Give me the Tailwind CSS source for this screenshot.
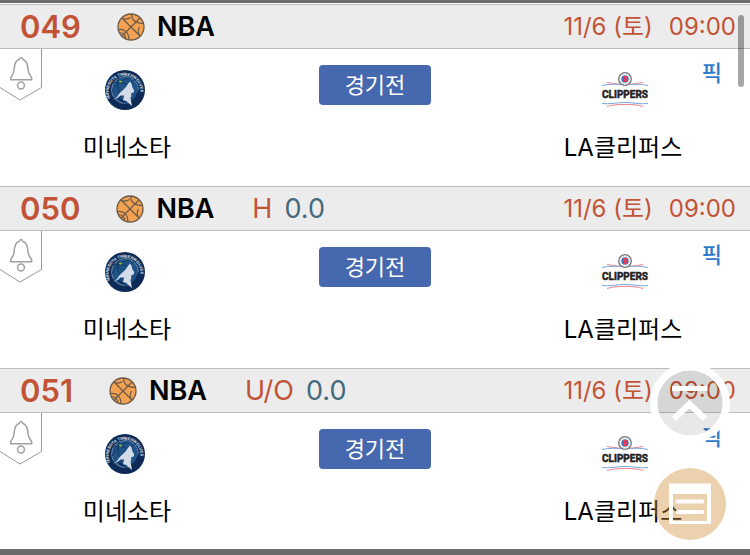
<!DOCTYPE html>
<html lang="ko">
<head>
<meta charset="utf-8">
<meta name="viewport" content="width=device-width, initial-scale=1">
<title>NBA</title>
<script src="https://cdn.jsdelivr.net/npm/@tailwindcss/browser@4"></script>
</head>
<body class="min-h-screen bg-white font-['Inter','Noto_Sans_CJK_KR',sans-serif] text-black overflow-hidden">
<svg class="hidden" aria-hidden="true">
  <symbol id="ball" viewBox="0 0 28 28">
    <circle cx="14" cy="14" r="13" fill="#f3a252" stroke="#6b5a49" stroke-width="1.3"/>
    <path d="M5 5 23 23M23 5 5 23M14.500 1c0 6 4 9.500 12.500 9.500M4.500 5c3 1.500 6 1.500 9-.5M1 16.500c7-1 11 3 11 10.500M2 19.500c4 0 6 2 7 6M23 23c-2.500-3-2.500-5.500-.5-9" fill="none" stroke="#6b5a49" stroke-width="1.2"/>
  </symbol>
  <symbol id="tag" viewBox="0 0 42 52">
    <path d="M41.5 0V38.500L20 51 0 38.500V0Z" fill="#fff"/>
    <path d="M41.500 0V38.500L20 51 0 38.500" fill="none" stroke="#999" stroke-width="1"/>
    <path d="M21 8.500c-1 0-1.300 1-1.600 1.700C15.600 11.500 14.500 15 14.300 19c-.2 4-.8 6-2.800 8.300-1 1.300-1.200 2-.8 3.500H31.600c.4-1.500.2-2.200-.8-3.500C28.800 25 28 23 27.800 19c-.2-4-1.600-7.500-5.200-8.800C22.300 9.500 22 8.500 21 8.500Z" fill="none" stroke="#a0a0a0" stroke-width="1.500" stroke-linejoin="round"/>
    <circle cx="21" cy="36.500" r="3.400" fill="none" stroke="#a0a0a0" stroke-width="1.500"/>
  </symbol>
  <symbol id="wolves" viewBox="0 0 40 40">
    <circle cx="20" cy="20" r="20" fill="#0e2a56"/>
    <circle cx="20" cy="20" r="13.500" fill="#1f5388" stroke="#9db0c6" stroke-width=".6"/>
    <path d="M8 13c7-2 15 0 22 8M7 22c4-8 10-13 18-14M14 8c-2 7-1 15 4 23M29 10c-6 5-8 12-8 20" fill="none" stroke="#123764" stroke-width="1"/>
    <path d="M5 29C9 26 13 28 15 31L28 37C35 31 36 25 34 19L30 27 23 34 14 28Z" fill="#0e2a56"/>
    <path d="M25 11.500 26.500 13.500 27.300 17 29.300 20.500 28.500 22.500 26 23.500 26.300 26 25.500 28 27 36 24 33.500 21.500 31 18 30 19.200 25.500 15.500 25.500 12.500 28 8 29.500 12 27 14.300 23.500 18 20 21 17 22.500 14.500Z" fill="#d3dce6"/>
    <path d="M13.500 11.500l2-1 2 1-2 1.300z" fill="#8abf32"/>
    <path id="wolvesArc" d="M5 28A16 16 0 1 1 34 28.500" fill="none"/>
    <text font-family="Liberation Sans" font-size="4" font-weight="700" fill="#e3e9f0"><textPath href="#wolvesArc">MINNESOTA TIMBERWOLVES</textPath></text>
  </symbol>
  <symbol id="clippers" viewBox="0 0 48 36">
    <g fill="none" stroke-width="1">
      <path d="M6 10.500c7 1 11 2 18 2s11-1 18-2M6 34.500c7-2 11-2 18-2s11 0 18 2" stroke="#ee8490"/>
      <path d="M1 13.500c8-2 14-1 23-1s15-1 23 1M1 31.500c8 1 14-1 23-1s15 2 23 1" stroke="#78a6dc"/>
    </g>
    <circle cx="24" cy="7" r="6.300" fill="#fff" stroke="#77777b" stroke-width="1.300"/>
    <circle cx="24" cy="7" r="5" fill="none" stroke="#aaa" stroke-width="1" stroke-dasharray="1 2"/>
    <circle cx="24" cy="7" r="3.700" fill="#3d75bd"/>
    <path d="M26.500 4.800h-3v4.400h3M23.500 7h3" fill="none" stroke="#ec3c58" stroke-width="1.500"/>
    <text x="24" y="26" text-anchor="middle" font-family="Roboto, Liberation Sans, sans-serif" font-size="10" font-weight="700" fill="#222" stroke="#222" stroke-width=".5">CLIPPERS</text>
  </symbol>
</svg>

<main class="border-t-3 border-[#6b6b6b]">
  <div class="pt-px pb-px">

  <section>
    <header class="flex h-[45px] items-center border-y border-[#bdbdbd] bg-[#ececec] pr-3.5 pl-5">
      <h2 class="text-[31px] leading-10 font-semibold text-[#c25336]">049</h2>
      <svg class="ml-9 size-7" aria-hidden="true"><use href="#ball"/></svg>
      <span class="ml-3 text-[27px] leading-10 font-semibold">NBA</span>
      <time class="ml-auto flex gap-4 text-[24px] leading-10 text-[#c25336]"><span>11/6 (토)</span><span>09:00</span></time>
    </header>
    <div class="relative grid grid-cols-3 pt-[21px] pb-[22px]">
      <button class="absolute top-0 left-0" aria-label="알림"><svg class="h-[52px] w-[42px]"><use href="#tag"/></svg></button>
      <div class="flex flex-col items-center gap-[22px]"><svg class="size-10" aria-hidden="true"><use href="#wolves"/></svg><p class="pl-1 text-[24px] leading-8">미네소타</p></div>
      <div class="-mt-[5px] flex items-start justify-center"><button class="h-10 w-28 rounded bg-[#4668ae] text-[22px] leading-8 text-white">경기전</button></div>
      <div class="flex flex-col items-center gap-[22px]"><span class="flex h-10 items-center"><svg class="h-9 w-12" aria-hidden="true"><use href="#clippers"/></svg></span><p class="pr-1 text-[24px] leading-8">LA클리퍼스</p></div>
      <a href="#" class="absolute top-2 right-7 text-[22px] leading-8 font-medium text-[#2f7bcb]">픽</a>
    </div>
  </section>

  <section>
    <header class="flex h-[45px] items-center border-y border-[#bdbdbd] bg-[#ececec] pr-3.5 pl-5">
      <h2 class="text-[31px] leading-10 font-semibold text-[#c25336]">050</h2>
      <svg class="ml-9 size-7" aria-hidden="true"><use href="#ball"/></svg>
      <span class="ml-3 text-[27px] leading-10 font-semibold">NBA</span>
      <span class="ml-[38px] text-[27px] leading-10 text-[#c25336]">H</span>
      <span class="ml-3 text-[27px] leading-10 text-[#44697d]">0.0</span>
      <time class="ml-auto flex gap-4 text-[24px] leading-10 text-[#c25336]"><span>11/6 (토)</span><span>09:00</span></time>
    </header>
    <div class="relative grid grid-cols-3 pt-[21px] pb-[22px]">
      <button class="absolute top-0 left-0" aria-label="알림"><svg class="h-[52px] w-[42px]"><use href="#tag"/></svg></button>
      <div class="flex flex-col items-center gap-[22px]"><svg class="size-10" aria-hidden="true"><use href="#wolves"/></svg><p class="pl-1 text-[24px] leading-8">미네소타</p></div>
      <div class="-mt-[5px] flex items-start justify-center"><button class="h-10 w-28 rounded bg-[#4668ae] text-[22px] leading-8 text-white">경기전</button></div>
      <div class="flex flex-col items-center gap-[22px]"><span class="flex h-10 items-center"><svg class="h-9 w-12" aria-hidden="true"><use href="#clippers"/></svg></span><p class="pr-1 text-[24px] leading-8">LA클리퍼스</p></div>
      <a href="#" class="absolute top-2 right-7 text-[22px] leading-8 font-medium text-[#2f7bcb]">픽</a>
    </div>
  </section>

  <section>
    <header class="flex h-[45px] items-center border-y border-[#bdbdbd] bg-[#ececec] pr-3.5 pl-5">
      <h2 class="text-[31px] leading-10 font-semibold text-[#c25336]">051</h2>
      <svg class="ml-9 size-7" aria-hidden="true"><use href="#ball"/></svg>
      <span class="ml-3 text-[27px] leading-10 font-semibold">NBA</span>
      <span class="ml-[38px] text-[27px] leading-10 text-[#c25336]">U/O</span>
      <span class="ml-3 text-[27px] leading-10 text-[#44697d]">0.0</span>
      <time class="ml-auto flex gap-4 text-[24px] leading-10 text-[#c25336]"><span>11/6 (토)</span><span>09:00</span></time>
    </header>
    <div class="relative grid grid-cols-3 pt-[21px] pb-[22px]">
      <button class="absolute top-0 left-0" aria-label="알림"><svg class="h-[52px] w-[42px]"><use href="#tag"/></svg></button>
      <div class="flex flex-col items-center gap-[22px]"><svg class="size-10" aria-hidden="true"><use href="#wolves"/></svg><p class="pl-1 text-[24px] leading-8">미네소타</p></div>
      <div class="-mt-[5px] flex items-start justify-center"><button class="h-10 w-28 rounded bg-[#4668ae] text-[22px] leading-8 text-white">경기전</button></div>
      <div class="flex flex-col items-center gap-[22px]"><span class="flex h-10 items-center"><svg class="h-9 w-12" aria-hidden="true"><use href="#clippers"/></svg></span><p class="pr-1 text-[24px] leading-8">LA클리퍼스</p></div>
      <a href="#" class="absolute top-2 right-7 text-[22px] leading-8 font-medium text-[#2f7bcb]">픽</a>
    </div>
  </section>

  </div>
</main>

<div class="fixed inset-x-0 bottom-0 h-1.5 bg-[#6b6b6b]"></div>
<div class="fixed top-[15px] right-1.5 h-[72px] w-1.5 rounded-full bg-black/35"></div>

<div class="fixed right-5 bottom-[15px] flex flex-col items-center gap-[25px]">
  <button class="size-20 rounded-full" aria-label="맨 위로">
    <svg viewBox="0 0 80 80" class="size-20" fill="none" stroke="#fff">
      <circle cx="40" cy="40" r="33" fill="#000" fill-opacity=".09" stroke="none"/>
      <circle cx="40" cy="40" r="36.300" stroke-width="7.400"/>
      <path d="M22 25.500H57.500" stroke-width="5"/>
      <path d="M24 56 39.500 41 55 56" stroke-width="6"/>
    </svg>
  </button>
  <button class="size-[72px] rounded-full" aria-label="목록">
    <svg viewBox="0 0 72 72" class="size-[72px]">
      <circle cx="36" cy="36" r="36" fill="#cf8c34" fill-opacity=".4"/>
      <path d="M15 15.500H57V56H15ZM19 26V53H53V26Z" fill="#fff" fill-rule="evenodd"/>
      <path d="M23.500 33.500H48.500M23.500 44H48.500" stroke="#fff" stroke-width="4" stroke-linecap="round"/>
    </svg>
  </button>
</div>
</body>
</html>
